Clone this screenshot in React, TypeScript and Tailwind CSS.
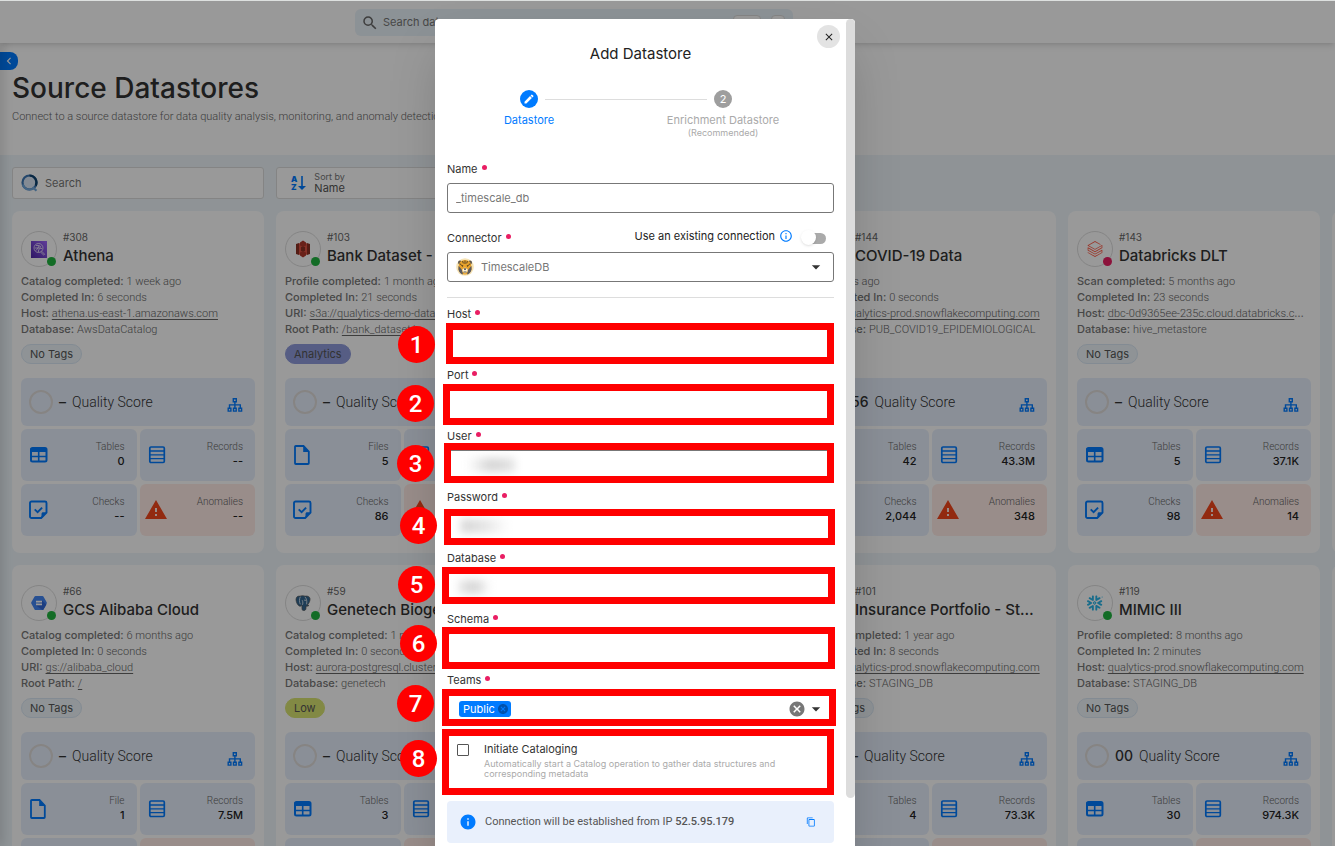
import React, { useId, useState } from "react";
import { MdArrowDropDown, MdCancel, MdChevronLeft, MdClose, MdContentCopy, MdEdit, MdInfo, MdOutlineInfo, MdSearch, MdWarning } from "react-icons/md";
import { SiDatabricks, SiSnowflake } from "react-icons/si";

type Brand = "athena" | "s3" | "gcs" | "postgres" | "snowflake" | "databricks";

interface Datastore {
  id: number;
  name: string;
  brand: Brand;
  healthy: boolean;
  facts: { label?: string; value: string; link?: boolean }[];
  tag: string;
  tagClass?: string;
  score: string;
  source: "Tables" | "Files" | "File";
  sourceCount: string;
  records: string;
  checks: string;
  anomalies: string;
}

const stores: (Datastore | null)[] = [
  {
    id: 308, name: "Athena", brand: "athena", healthy: true,
    facts: [
      { label: "Catalog completed", value: "1 week ago" },
      { label: "Completed In", value: "6 seconds" },
      { label: "Host", value: "athena.us-east-1.amazonaws.com", link: true },
      { label: "Database", value: "AwsDataCatalog" },
    ],
    tag: "No Tags", score: "–", source: "Tables", sourceCount: "0", records: "--", checks: "--", anomalies: "--",
  },
  {
    id: 66, name: "GCS Alibaba Cloud", brand: "gcs", healthy: true,
    facts: [
      { label: "Catalog completed", value: "6 months ago" },
      { label: "Completed In", value: "0 seconds" },
      { label: "URI", value: "gs://alibaba_cloud", link: true },
      { label: "Root Path", value: "/", link: true },
    ],
    tag: "No Tags", score: "–", source: "File", sourceCount: "1", records: "7.5M", checks: "--", anomalies: "--",
  },
  {
    id: 103, name: "Bank Dataset - Staging", brand: "s3", healthy: true,
    facts: [
      { label: "Profile completed", value: "1 month ago" },
      { label: "Completed In", value: "21 seconds" },
      { label: "URI", value: "s3a://qualytics-demo-data", link: true },
      { label: "Root Path", value: "/bank_dataset/", link: true },
    ],
    tag: "Analytics", tagClass: "border-[#8f9bdc] bg-[#8f9bdc]", score: "–", source: "Files", sourceCount: "5", records: "--", checks: "86", anomalies: "--",
  },
  {
    id: 59, name: "Genetech Biogeniius", brand: "postgres", healthy: true,
    facts: [
      { label: "Catalog completed", value: "1 month ago" },
      { label: "Completed In", value: "0 seconds" },
      { label: "Host", value: "aurora-postgresql.cluster", link: true },
      { label: "Database", value: "genetech" },
    ],
    tag: "Low", tagClass: "border-[#d9e472] bg-[#d9e472]", score: "–", source: "Tables", sourceCount: "3", records: "--", checks: "--", anomalies: "--",
  },
  null,
  null,
  {
    id: 144, name: "COVID-19 Data", brand: "snowflake", healthy: true,
    facts: [
      { value: "4 months ago" },
      { label: "Completed In", value: "0 seconds" },
      { label: "Host", value: "qualytics-prod.snowflakecomputing.com", link: true },
      { label: "Database", value: "PUB_COVID19_EPIDEMIOLOGICAL" },
    ],
    tag: "Low", tagClass: "border-[#d9e472] bg-[#d9e472]", score: "56", source: "Tables", sourceCount: "42", records: "43.3M", checks: "2,044", anomalies: "348",
  },
  {
    id: 101, name: "Insurance Portfolio - Staging", brand: "snowflake", healthy: true,
    facts: [
      { label: "Scan completed", value: "1 year ago" },
      { label: "Completed In", value: "8 seconds" },
      { label: "Host", value: "qualytics-prod.snowflakecomputing.com", link: true },
      { label: "Database", value: "STAGING_DB" },
    ],
    tag: "No Tags", score: "–", source: "Tables", sourceCount: "4", records: "73.3K", checks: "--", anomalies: "--",
  },
  {
    id: 143, name: "Databricks DLT", brand: "databricks", healthy: false,
    facts: [
      { label: "Scan completed", value: "5 months ago" },
      { label: "Completed In", value: "23 seconds" },
      { label: "Host", value: "dbc-0d9365ee-235c.cloud.databricks.com", link: true },
      { label: "Database", value: "hive_metastore" },
    ],
    tag: "No Tags", score: "–", source: "Tables", sourceCount: "5", records: "37.1K", checks: "98", anomalies: "14",
  },
  {
    id: 119, name: "MIMIC III", brand: "snowflake", healthy: true,
    facts: [
      { label: "Profile completed", value: "8 months ago" },
      { label: "Completed In", value: "2 minutes" },
      { label: "Host", value: "qualytics-prod.snowflakecomputing.com", link: true },
      { label: "Database", value: "STAGING_DB" },
    ],
    tag: "No Tags", score: "00", source: "Tables", sourceCount: "30", records: "974.3K", checks: "--", anomalies: "--",
  },
  null,
  null,
];

function BrandLogo({ brand }: { brand: Brand }) {
  if (brand === "snowflake") return <SiSnowflake className="size-4 text-[#29b5e8]" />;
  if (brand === "databricks") return <SiDatabricks className="size-4 text-[#ff5a45]" />;
  if (brand === "postgres")
    return (
      <svg viewBox="0 0 16 16" className="size-4">
        <path d="M1 4.500C1 2 3 .8 5 1.200c1.600-.7 3.600-.7 5 0C13 .6 15.400 2 15 4.800c-.3 2.200-1.500 4.200-3 5.200l2 .3c-.9 1-2.200 1.200-3 .8V13c0 1.800-1 2.600-2.300 2.600S7 14.800 7 13l-.2-3c-.6.8-1.400 1.400-2 1.200C2.800 10.800 1 7 1 4.500Z" fill="#336791" stroke="#555" strokeWidth=".7" />
        <path d="M5.300 1.800C4.200 4 4.200 7 5.300 9.300M10 2c1.500 1.500 2.200 3.600 1.600 7.300M7 10c1.200-.5 1-3.200.2-4.800M11 5.300c-1 .1-1.500-.1-2-.3" fill="none" stroke="#e8eef4" strokeWidth=".8" />
      </svg>
    );
  if (brand === "gcs")
    return (
      <svg viewBox="0 0 16 16" className="size-4">
        <path d="M4.600 1h6.800c.5 0 .8.2 1 .6l3.300 5.700c.2.4.2.9 0 1.300l-3.300 5.800c-.2.4-.5.6-1 .6H4.600c-.5 0-.8-.2-1-.6L.3 8.600c-.2-.4-.2-.9 0-1.300l3.300-5.700c.2-.4.5-.6 1-.6Z" fill="#4285f4" />
        <path d="m11 5.500 4.400 4-3 5.200-.9.300L5 10.400Z" fill="#3068d8" />
        <path d="M5 5.700h6v1.700H5zM5 8.500h6v1.700H5z" fill="#fff" />
      </svg>
    );
  if (brand === "s3")
    return (
      <svg viewBox="0 0 16 18" className="h-[18px] w-4">
        <path d="m1 4 3-1v12l-3-1ZM15 4l-3-1v12l3-1Z" fill="#8c3123" />
        <path d="m4 3 4 2v8l-4 2ZM12 3 8 5v8l4 2Z" fill="#e05243" />
        <path d="m5 2.500 3-2 3 2v3L8 6.500 5 5.500ZM5 12.500l3-1 3 1v3l-3 2-3-2Z" fill="#b0372a" />
        <path d="m6 7 2-.7L10 7v4l-2 .7L6 11Z" fill="#8c3123" />
      </svg>
    );
  return (
    <svg viewBox="0 0 16 17" className="h-[17px] w-4">
      <defs>
        <linearGradient id="athena-fill" x1="0" y1="1" x2="1" y2="0">
          <stop stopColor="#4d27a8" />
          <stop offset="1" stopColor="#a166ff" />
        </linearGradient>
      </defs>
      <path d="M0 0h16v17H0Z" fill="url(#athena-fill)" />
      <g fill="none" stroke="#fff" strokeWidth=".7">
        <circle cx="7.500" cy="7" r="4.500" />
        <path d="m10.600 10.200 3 3-.9.900-3.100-3M5 4.500h3l2 1.500M4 7h3l1-2M5 9.500l2-2.500h3l1 1M7.500 11V9l2-2" />
      </g>
    </svg>
  );
}

const iconClass = "size-5 shrink-0 text-[#007bff]";

function TableIcon() {
  return (
    <svg viewBox="0 0 20 20" className={iconClass}>
      <rect x="2" y="3" width="15.500" height="13.500" rx="1.500" fill="none" stroke="currentColor" strokeWidth="2" />
      <path d="M1.500 3h16.500v4H1.500z" fill="currentColor" />
      <path d="M2 11.500h15M9.700 7v9.500" stroke="currentColor" strokeWidth="1.600" />
    </svg>
  );
}
function FileIcon() {
  return (
    <svg viewBox="0 0 20 20" className={iconClass}>
      <path d="M2.800 1h7.700l5.300 5.500v11.700c0 .4-.3.800-.8.800H2.800c-.5 0-.8-.4-.8-.8V1.800c0-.5.300-.8.800-.8Z" fill="none" stroke="currentColor" strokeWidth="1.800" />
      <path d="M10.200 1v6h6Z" fill="currentColor" />
    </svg>
  );
}
function RecordsIcon() {
  return (
    <svg viewBox="0 0 20 20" className={iconClass}>
      <rect x="1.800" y="2" width="14.500" height="15.500" rx="1.200" fill="none" stroke="currentColor" strokeWidth="1.700" />
      <path d="M2 6h14M2 9.800h14M2 13.600h14" stroke="currentColor" strokeWidth="1.300" />
    </svg>
  );
}
function ChecksIcon() {
  return (
    <svg viewBox="0 0 20 20" className={iconClass}>
      <path d="M2.500 1.500h13.500c.8 0 1.500.7 1.500 1.500v9.700l-5.300 5.300H2.500c-.8 0-1.500-.7-1.500-1.500V3c0-.8.700-1.500 1.500-1.500Z" fill="none" stroke="currentColor" strokeWidth="1.900" />
      <path d="M17.500 12.200h-3.300c-1 0-1.700.7-1.700 1.700V18Z" fill="currentColor" />
      <path d="m5.700 9.400 2.900 2.800 4.500-4.500" fill="none" stroke="currentColor" strokeWidth="1.900" />
    </svg>
  );
}
function HierarchyIcon() {
  return (
    <svg viewBox="0 0 16 16" className="size-4 text-[#007bff]" fill="none" stroke="currentColor" strokeWidth="1.400">
      <path d="M6.300 1.700h3v3h-3zM1.200 11.200h2.700v2.900H1.200zM6.500 11.200h2.700v2.900H6.500zM11.900 11.200h2.700v2.900h-2.700zM7.900 5v6M2.500 11V7.900h10.800V11" />
    </svg>
  );
}

function Metric({ icon, label, value, alert }: { icon: React.ReactNode; label: string; value: string; alert?: boolean }) {
  return (
    <div className={`flex h-[52px] items-center justify-between rounded-md pr-3 pl-2 ${alert ? "bg-[#ffebe6]" : "bg-[#e7effc]"}`}>
      {icon}
      <div className="text-right">
        <p className="font-['Roboto',sans-serif] text-[10px] leading-3 font-light text-[#666]">{label}</p>
        <p className="text-[11px] leading-4 font-medium text-[#222]">{value}</p>
      </div>
    </div>
  );
}

function StoreCard({ store }: { store: Datastore }) {
  return (
    <article className="rounded-lg bg-white px-[9px] pt-5 pb-[17px]">
      <div className="flex items-start gap-1.5">
        <div className="relative flex size-9 shrink-0 items-center justify-center rounded-full border border-[#ddd]">
          <BrandLogo brand={store.brand} />
          <span className={`absolute right-0 bottom-0 size-[9px] rounded-full ${store.healthy ? "bg-[#21b540]" : "bg-[#e91e63]"}`} />
        </div>
        <div className="min-w-0 pr-2">
          <p className="text-[10px] leading-3 text-[#666]">#{store.id}</p>
          <h2 className="truncate text-[15px] leading-[26px] font-medium text-[#333]">{store.name}</h2>
        </div>
      </div>
      <dl className="mt-1 mr-1 text-[11px] leading-4">
        {store.facts.map((fact) => (
          <div key={fact.value} className="h-4 truncate text-[#8a8a8a]">
            {fact.label && <dt className="inline font-medium text-[#777]">{fact.label}: </dt>}
            <dd className="inline font-['Roboto',sans-serif] font-light text-[#666]">
              {fact.link ? <a href="#" className="underline underline-offset-2">{fact.value}</a> : fact.value}
            </dd>
          </div>
        ))}
      </dl>
      <span className={`mt-[7px] inline-flex h-5 items-center rounded-full border px-2 text-[11px] text-[#555] ${store.tagClass ?? "border-[#dbe8f5] bg-[#eef6fb]"}`}>
        {store.tag}
      </span>
      <div className="mt-[14px] flex h-12 items-center rounded-md bg-[#e7effc] pr-3 pl-2">
        <span className="size-6 shrink-0 rounded-full border-2 border-[#dfdcda]" />
        <span className="ml-1.5 text-sm font-medium text-[#333]">{store.score}</span>
        <span className="ml-1.5 font-['Roboto',sans-serif] text-sm font-light text-[#333]">Quality Score</span>
        <span className="mt-1.5 ml-auto"><HierarchyIcon /></span>
      </div>
      <div className="mt-[3px] grid grid-cols-2 gap-[3px]">
        <Metric icon={store.source === "Tables" ? <TableIcon /> : <FileIcon />} label={store.source} value={store.sourceCount} />
        <Metric icon={<RecordsIcon />} label="Records" value={store.records} />
        <Metric icon={<ChecksIcon />} label="Checks" value={store.checks} />
        <Metric icon={<MdWarning className="-ml-1 size-6 shrink-0 text-[#f4461c]" />} label="Anomalies" value={store.anomalies} alert />
      </div>
    </article>
  );
}

function QLogo() {
  return (
    <svg viewBox="0 0 18 18" className="size-[18px]" fill="none" strokeWidth="2.200">
      <circle cx="8.500" cy="8.500" r="7" stroke="#3f78b5" fill="#dde8f7" />
      <path d="M8.500 1.500a7 7 0 0 1 6.200 10.200" stroke="#10436f" />
      <path d="M1.800 10.500a7 7 0 0 0 6.700 5c2 0 3.400-.6 4-1.500l3 2.700" stroke="#73a9dc" />
    </svg>
  );
}

function Label({ htmlFor, children }: { htmlFor: string; children: string }) {
  return (
    <label htmlFor={htmlFor} className="flex h-4 items-center text-[11px] leading-4 text-[#333]">
      {children}
      <span className="mb-1 ml-1 size-[5px] rounded-full bg-[#e91e63]" />
    </label>
  );
}

function Callout({ n, frame, badge }: { n: number; frame: string; badge: string }) {
  return (
    <>
      <span className={`pointer-events-none absolute border-[7px] border-[#ff0000] ${frame}`} />
      <span className={`pointer-events-none absolute flex size-[37px] items-center justify-center rounded-full bg-[#ff0000] font-['Roboto',sans-serif] text-2xl font-medium text-white ${badge}`}>
        {n}
      </span>
    </>
  );
}

const inputClass = "h-[30px] w-full rounded-[3px] border border-[#777] bg-white px-2 text-[11px] text-[#777] outline-none";

const credentials = [
  { label: "Host", frame: "-top-[5px] -right-0 -bottom-[6px] -left-px", badge: "-top-[2px] -left-[49px]" },
  { label: "Port", frame: "-top-[5px] -right-0 -bottom-[6px] -left-[4px]", badge: "-top-[4px] -left-[50px]" },
  { label: "User", frame: "-top-[7px] -right-0 -bottom-[3px] -left-[3px]", badge: "-top-[5px] -left-[50px]", mask: "left-5 w-12 from-transparent via-neutral-300 to-neutral-200" },
  { label: "Password", frame: "-top-[2px] -right-px -bottom-[4px] -left-[3px]", badge: "-top-[4px] -left-[47px]", mask: "left-3.5 w-12 from-neutral-300 via-neutral-200 to-transparent" },
  { label: "Database", frame: "-top-[5px] -right-px -bottom-[2px] -left-[5px]", badge: "-top-[6px] -left-[49px]", mask: "left-3 w-8 from-neutral-200 via-neutral-300 to-transparent" },
  { label: "Schema", frame: "-top-[6px] -right-px -bottom-[6px] -left-[5px]", badge: "-top-[8px] -left-[47px]" },
];

function Credential({ label, frame, badge, mask, n }: { label: string; frame: string; badge: string; mask?: string; n: number }) {
  const id = useId();
  return (
    <div>
      <Label htmlFor={id}>{label}</Label>
      <div className="relative mt-1.5">
        <input id={id} type={label === "Password" ? "password" : "text"} className={`${inputClass} block`} />
        {mask && <span className={`pointer-events-none absolute top-2 h-3.5 bg-linear-to-r blur-xs ${mask}`} />}
        <Callout n={n} frame={frame} badge={badge} />
      </div>
    </div>
  );
}

function TigerIcon() {
  return (
    <svg viewBox="0 0 18 18" className="size-[18px]">
      <circle cx="9" cy="9" r="8.800" fill="#f6e3b5" />
      <circle cx="4" cy="4.500" r="2" fill="#5a5550" />
      <circle cx="14" cy="4.500" r="2" fill="#5a5550" />
      <path d="M3 6c1-3 3.500-4 6-4s5 1 6 4l.8 5c-1 3-3.500 5.500-6.800 5.500S3.200 14 2.200 11Z" fill="#e8a32c" />
      <path d="M2.500 8c1.500 1 2 2 3.500 4l1 4.500c-2-.3-4-2-4.500-5ZM15.500 8c-1.500 1-2 2-3.500 4l-1 4.500c2-.3 4-2 4.500-5Z" fill="#5a5a60" />
      <path d="m6.500 11 2.500-1.500 2.500 1.500v2.500L9 15.500l-2.500-2Z" fill="#fff3d6" />
      <path d="M7.500 10.500h3L9 12.300ZM4.800 7.200l2.500.4-.6 1.200ZM13.200 7.200l-2.500.4.6 1.200Z" fill="#1d1b19" />
      <path d="M9 2.500V6M6.600 3l.7 2.400M11.400 3l-.7 2.400M3.600 6l1.700.4M14.400 6l-1.700.4M7.500 14h3" stroke="#2d2925" strokeWidth=".8" />
    </svg>
  );
}

function AddDatastoreDialog() {
  const [existing, setExisting] = useState(false);
  return (
    <div role="dialog" aria-labelledby="dialog-title" className="relative flex w-[420px] rounded-t bg-white shadow-2xl">
      <button type="button" aria-label="Close" className="absolute top-1.5 right-[15px] flex size-[23px] items-center justify-center rounded-full bg-[#e3e3e3] text-[#222]">
        <MdClose className="size-3" />
      </button>
      <div className="min-w-0 flex-1 px-3 pt-[23px] pb-5">
        <h1 id="dialog-title" className="text-center text-[15px] leading-6 text-[#222]">Add Datastore</h1>

        <ol className="mt-6 flex pr-[55px] pl-[26px] text-center text-[11px] leading-4">
          <li className="flex w-28 flex-col items-center text-[#007bff]">
            <span className="mb-1 flex size-[18px] items-center justify-center rounded-full bg-[#007bff] text-white"><MdEdit className="size-3" /></span>
            Datastore
          </li>
          <li aria-hidden="true" className="-mx-10 mt-[9px] h-px flex-1 bg-[#ddd]" />
          <li className="flex w-28 flex-col items-center whitespace-nowrap text-[#aaa]">
            <span className="mb-1 flex size-[18px] items-center justify-center rounded-full bg-[#9e9e9e] text-white">2</span>
            Enrichment Datastore
            <span className="text-[9px] leading-[10px]">(Recommended)</span>
          </li>
        </ol>

        <div className="mt-[23px]">
          <Label htmlFor="name">Name</Label>
          <input id="name" defaultValue="_timescale_db" className={`${inputClass} mt-1.5 block`} />
        </div>

        <div className="mt-[17px]">
          <div className="flex items-center justify-between">
            <Label htmlFor="connector">Connector</Label>
            <label className="flex h-4 items-center gap-1 pr-2 text-[11px] text-[#222]">
              <span className="mb-1">Use an existing connection</span>
              <MdOutlineInfo className="mb-1 size-[14px] text-[#007bff]" />
              <span className="relative ml-1 flex h-4 w-[25px] items-center justify-end">
                <input type="checkbox" role="switch" checked={existing} onChange={() => setExisting(!existing)} className="h-[11px] w-[21px] appearance-none rounded-full bg-[#aaa] checked:bg-[#007bff]" />
                <span className={`absolute top-0 size-[15px] rounded-full bg-white shadow ${existing ? "right-0" : "left-0"}`} />
              </span>
            </label>
          </div>
          <div className="relative mt-1.5 flex items-center">
            <select id="connector" className={`${inputClass} appearance-none pl-[33px]!`}>
              <option>TimescaleDB</option>
            </select>
            <span className="pointer-events-none absolute left-[9px]"><TigerIcon /></span>
            <MdArrowDropDown className="pointer-events-none absolute right-2 size-5 text-[#333]" />
          </div>
        </div>

        <hr className="mt-[15px] border-[#ddd]" />

        <div className="mt-2 flex flex-col gap-[9px]">
          {credentials.map((field, i) => (
            <Credential key={field.label} n={i + 1} {...field} />
          ))}
          <div>
            <Label htmlFor="teams">Teams</Label>
            <div className="relative mt-1.5 flex h-[30px] items-center rounded-[3px] border border-[#777] pr-[7px] pl-[11px]">
              <span className="flex h-4 items-center gap-0.5 rounded-[3px] bg-[#007bff] pr-0.5 pl-1 text-[11px] text-white">
                Public
                <button type="button" aria-label="Remove Public"><MdCancel className="size-3 text-[#0052ad]" /></button>
              </span>
              <input id="teams" className="h-5 min-w-0 flex-1 outline-none" />
              <button type="button" aria-label="Clear teams"><MdCancel className="size-[18px] text-[#777]" /></button>
              <MdArrowDropDown className="size-5 text-[#333]" />
              <Callout n={7} frame="-top-[6px] -right-[3px] -bottom-[3px] -left-[6px]" badge="-top-[10px] -left-[51px]" />
            </div>
          </div>
        </div>

        <div className="relative mt-3 flex h-[52px] gap-[15px] pt-1.5 pl-[10px]">
          <input id="catalog" type="checkbox" className="mt-0.5 size-3 shrink-0 appearance-none rounded-[1px] border border-[#555] checked:bg-[#007bff]" />
          <div>
            <label htmlFor="catalog" className="block text-[11px] leading-[15px] text-[#333]">Initiate Cataloging</label>
            <p className="mt-0.5 pr-6 text-[9px] leading-[10px] text-[#aaa]">Automatically start a Catalog operation to gather data structures and corresponding metadata</p>
          </div>
          <Callout n={8} frame="-top-[7px] -right-0 -bottom-[7px] -left-[5px]" badge="top-1 -left-[47px]" />
        </div>

        <div className="mt-[13px] flex h-[42px] items-center rounded bg-[#e9f0fc] pr-[18px] pl-3 text-[11px] text-[#555]">
          <MdInfo className="mr-2 size-[18px] text-[#007bff]" />
          <p className="font-['Roboto',sans-serif]">Connection will be established from IP <b className="font-medium">52.5.95.179</b></p>
          <button type="button" aria-label="Copy IP" className="ml-auto text-[#007bff]"><MdContentCopy className="size-[10px]" /></button>
        </div>
      </div>
      <div className="h-[779px] w-[9px] rounded-full bg-[#dcdcdc]" />
    </div>
  );
}

export default function App() {
  return (
    <div className="relative flex h-screen flex-col overflow-hidden border-t border-[#dde0df] bg-[#eef6fb] font-['Inter',sans-serif]">
      <header className="z-10 flex h-[42px] shrink-0 justify-center bg-white pt-2 pr-[187px] shadow-md">
        <div className="flex h-[27px] w-[438px] items-center rounded-md bg-[#eaf3fa] px-1.5">
          <MdSearch className="size-[18px] text-[#666]" />
          <input aria-label="Search data" placeholder="Search data" className="ml-1 min-w-0 flex-1 text-[11px] outline-none placeholder:text-[#777]" />
          <kbd className="mr-2.5 h-4 w-7 rounded border border-[#ddd] bg-white" />
          <kbd className="mr-0.5 h-4 w-[14px] rounded border border-[#ddd] bg-white" />
        </div>
      </header>

      <section className="h-28 shrink-0 bg-white pl-3">
        <button type="button" aria-label="Collapse menu" className="mt-[9px] -ml-3 flex h-[18px] w-[18px] items-center justify-center rounded-r-lg bg-[#007bff] text-white">
          <MdChevronLeft className="size-3.5" />
        </button>
        <h1 className="text-[28px] leading-9 font-medium text-[#333]">Source Datastores</h1>
        <p className="mt-[3px] font-['Roboto',sans-serif] text-[11px] leading-4 font-light text-[#666]">Connect to a source datastore for data quality analysis, monitoring, and anomaly detection.</p>
      </section>

      <main className="px-3 pt-3">
        <div className="flex gap-3">
          <label className="flex h-8 w-[252px] items-center gap-1.5 rounded-[3px] border border-[#ddd] bg-white pl-2">
            <QLogo />
            <input aria-label="Search" placeholder="Search" className="min-w-0 flex-1 text-[11px] outline-none placeholder:text-[#777]" />
          </label>
          <label className="relative flex h-8 w-[252px] items-center rounded-[3px] border border-[#ddd] bg-white pl-[14px]">
            <span aria-hidden="true" className="flex flex-col text-[8px] leading-[8px] font-black text-[#007bff]"><span>A</span><span>Z</span></span>
            <svg viewBox="0 0 8 16" className="ml-px h-4 w-2 text-[#007bff]"><path d="M3.200 1h1.600v10H8l-4 4-4-4h3.200Z" fill="currentColor" /></svg>
            <span className="ml-2 flex flex-1 flex-col">
              <span className="text-[9px] leading-[10px] text-[#777]">Sort by</span>
              <select className="appearance-none text-[11px] leading-3 text-[#555] outline-none"><option>Name</option></select>
            </span>
          </label>
        </div>
        <div className="mt-3 grid auto-cols-[252px] grid-flow-col grid-rows-2 gap-3">
          {stores.map((store, i) => (store ? <StoreCard key={store.id} store={store} /> : <div key={i} className="rounded-lg bg-white" />))}
        </div>
      </main>

      <div className="absolute inset-y-0 -left-1 w-1 shadow-[0_0_12px_rgba(0,0,0,0.35)]" />

      <div className="absolute inset-0 z-20 flex items-start justify-center bg-black/40 pt-[18px] pr-[45px]">
        <AddDatastoreDialog />
      </div>
    </div>
  );
}
